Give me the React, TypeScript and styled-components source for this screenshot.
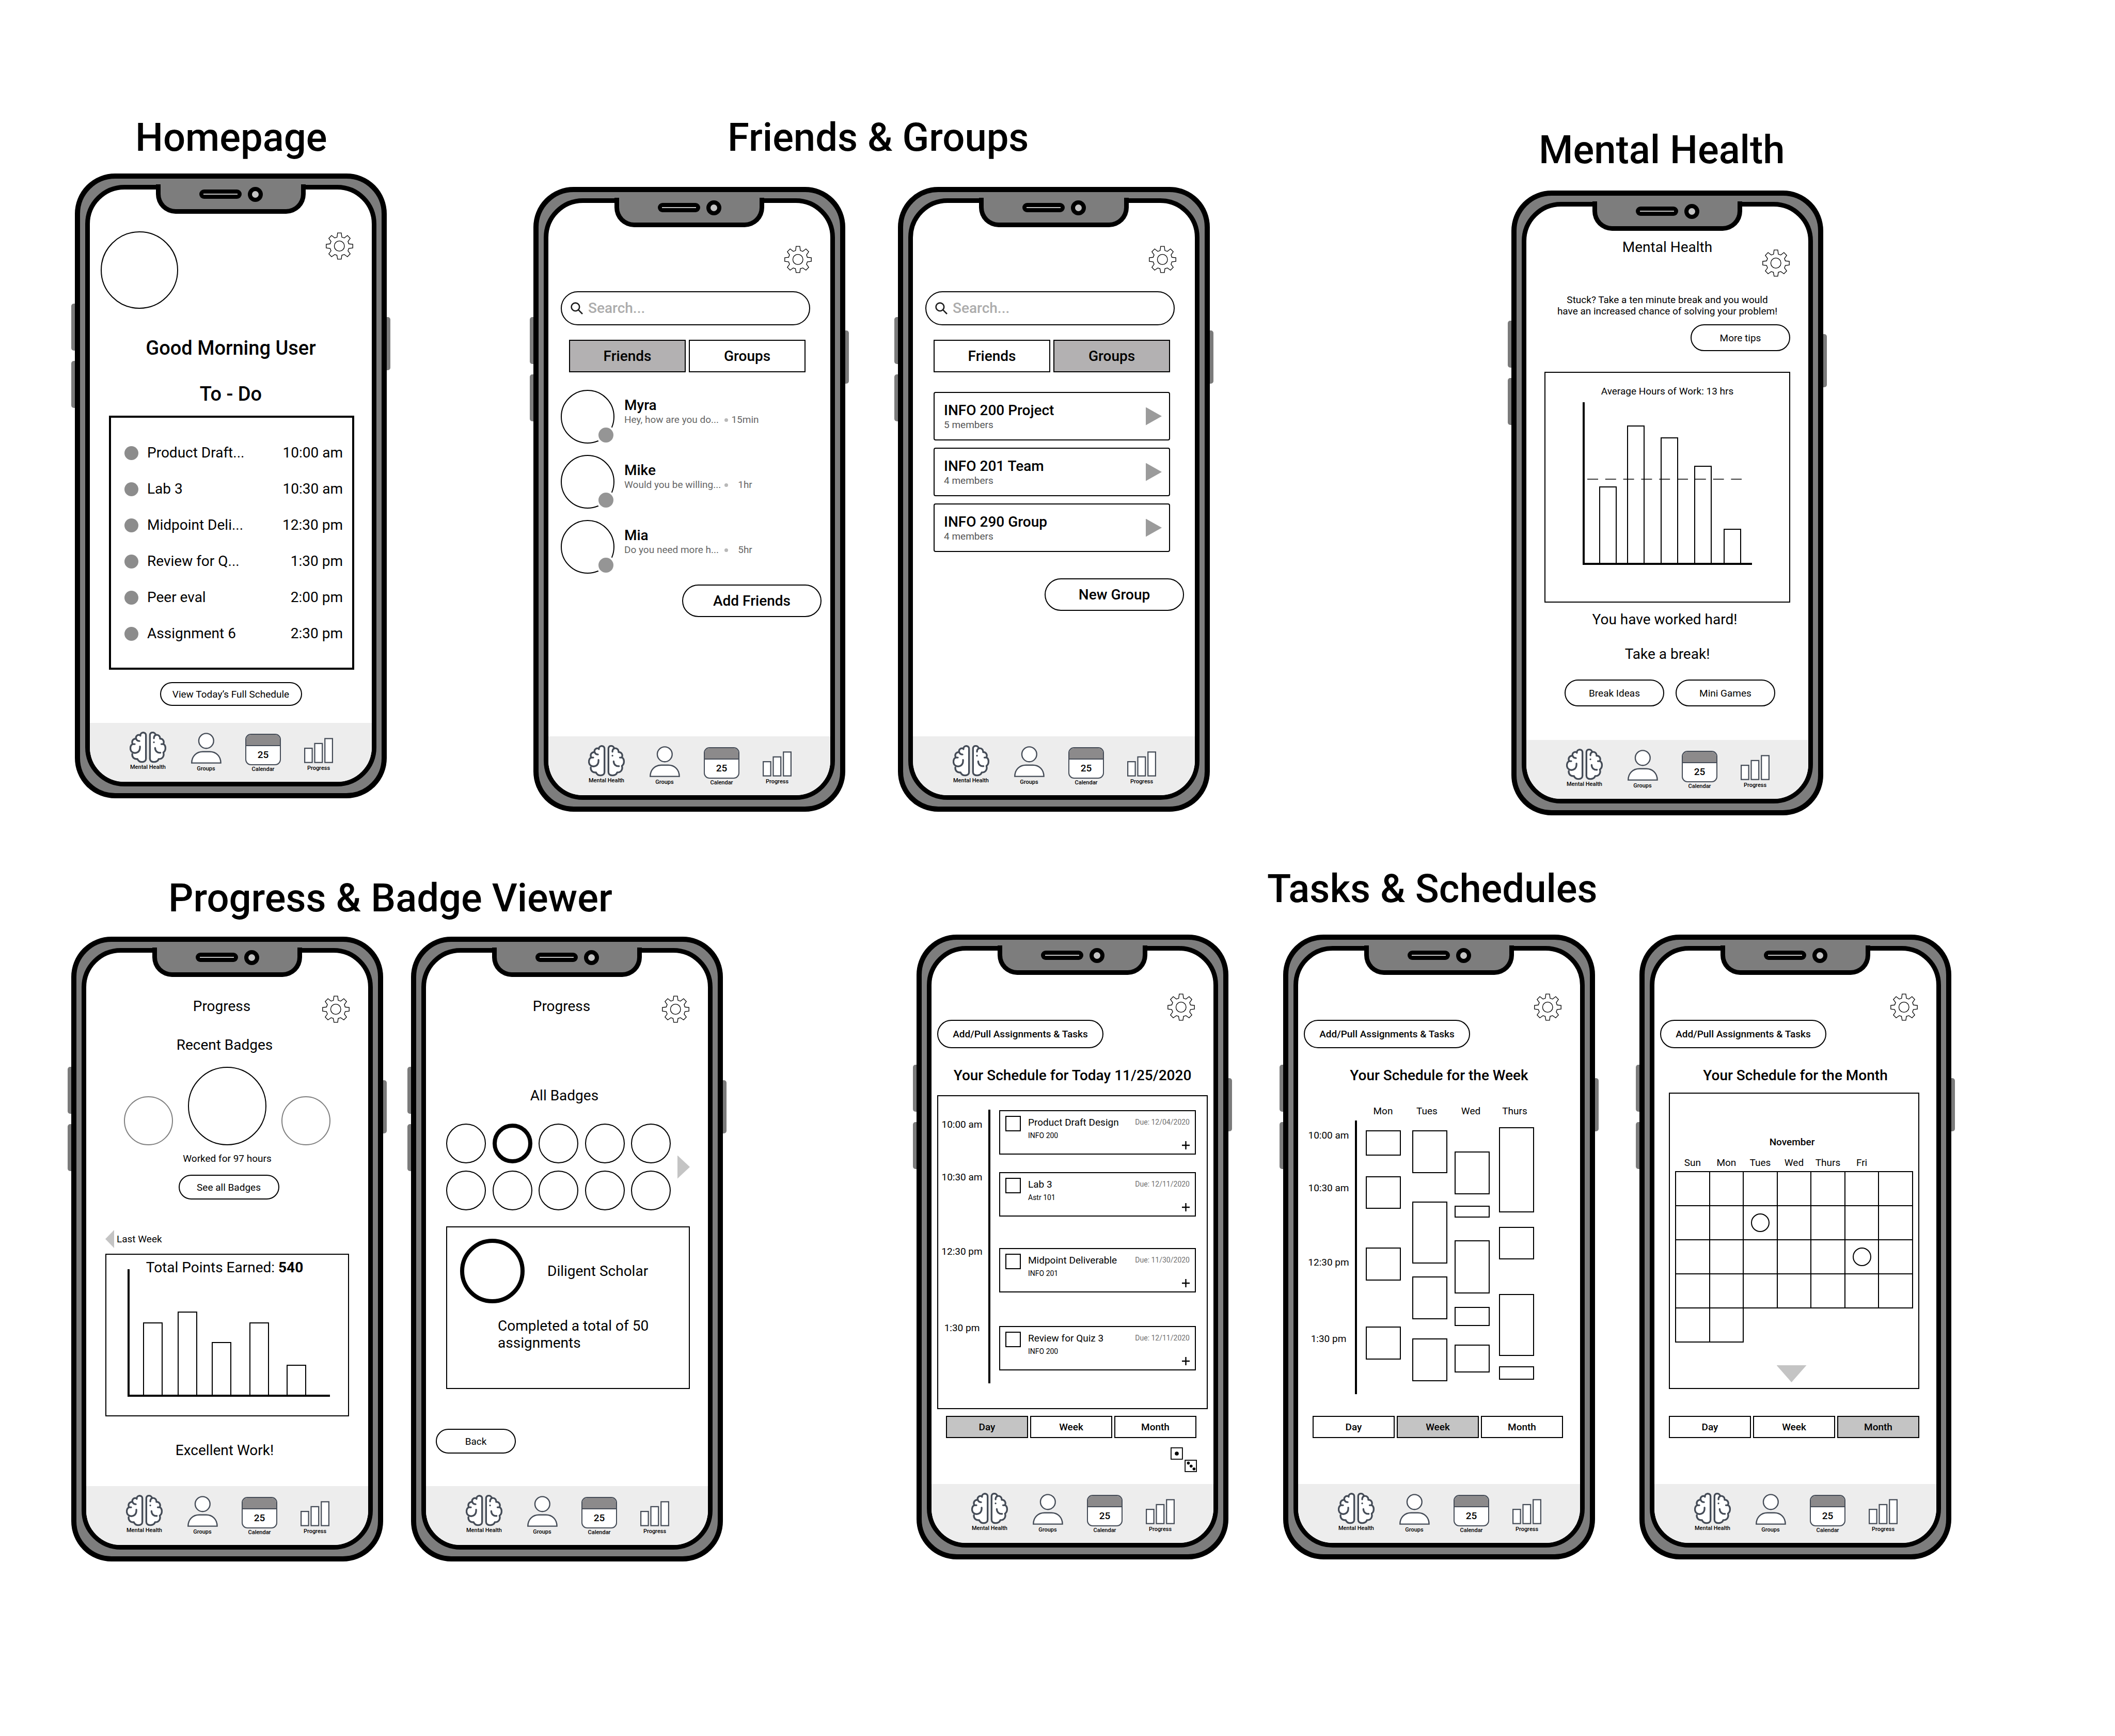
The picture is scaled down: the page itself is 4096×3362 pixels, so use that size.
import React, { useId } from "react";
import styled, { createGlobalStyle, css } from "styled-components";

const ink = "#000000";
const shell = "#7d7d7d";
const slate = "#454c57";
const soft = "#c4c4c4";

const GlobalStyle = createGlobalStyle`
  *, *::before, *::after { box-sizing: border-box; }
  body {
    margin: 0;
    background: #ffffff;
    color: ${ink};
    font-family: Roboto, "Liberation Sans", sans-serif;
  }
  h1, h2, h3, p, ul, ol, figure { margin: 0; padding: 0; }
  ul, ol { list-style: none; }
  button, input {
    font: inherit;
    color: inherit;
    margin: 0;
    padding: 0;
    background: none;
    border: 0;
    border-radius: 0;
  }
  svg { display: block; }
`;

/* ---------- board ---------- */

const Board = styled.main`
  padding: 221px 0 338px;
`;

const BoardRow = styled.div<{ $columns: string; $inset: number }>`
  display: grid;
  grid-template-columns: ${(p) => p.$columns};
  align-items: start;
  padding-left: ${(p) => p.$inset}px;
  & + & {
    margin-top: 97px;
  }
`;

const Group = styled.section<{ $drop?: number }>`
  padding-top: ${(p) => p.$drop ?? 0}px;
`;

const GroupTitle = styled.h1<{ $indent: number }>`
  padding-left: ${(p) => p.$indent}px;
  font-size: 76px;
  line-height: 90px;
  font-weight: 500;
  white-space: nowrap;
`;

const Phones = styled.div<{ $columns: string; $gap: number }>`
  display: grid;
  grid-template-columns: ${(p) => p.$columns};
  margin-top: ${(p) => p.$gap}px;
`;

/* ---------- phone ---------- */

const Shell = styled.article`
  position: relative;
  display: flex;
  width: 604px;
  min-height: 1210px;
  padding: 12px 10px 13px;
  border: 10px solid ${ink};
  border-radius: 78px;
  background: ${shell};
`;

const SideKey = styled.span<{ $side: "left" | "right"; $top: number; $size: number }>`
  position: absolute;
  top: ${(p) => p.$top}px;
  width: 7px;
  height: ${(p) => p.$size}px;
  background: #7b7b7b;
  ${(p) =>
    p.$side === "left"
      ? css`
          left: -17px;
          border-radius: 5px 0 0 5px;
        `
      : css`
          right: -17px;
          border-radius: 0 5px 5px 0;
        `}
`;

const Screen = styled.div`
  flex: 1;
  display: flex;
  flex-direction: column;
  overflow: hidden;
  border: 9px solid ${ink};
  border-radius: 76px;
  background: #ffffff;
`;

const Notch = styled.div`
  position: absolute;
  top: 11px;
  left: 50%;
  transform: translateX(-50%);
  display: flex;
  justify-content: center;
  gap: 12px;
  width: 290px;
  height: 57px;
  padding-top: 5px;
  border: 9px solid ${ink};
  border-top: 0;
  border-radius: 0 0 38px 38px;
  background: ${shell};
`;

const Speaker = styled.span`
  width: 82px;
  height: 18px;
  margin-top: 5px;
  padding: 8px;
  border-radius: 9px;
  background: ${ink};
  &::after {
    content: "";
    display: block;
    height: 2px;
    background: ${soft};
  }
`;

const Camera = styled.span`
  width: 29px;
  height: 29px;
  border: 8px solid ${ink};
  border-radius: 50%;
  background: ${soft};
`;

const Body = styled.div`
  flex: 1;
`;

/* ---------- bottom navigation ---------- */

const Nav = styled.nav`
  display: flex;
  align-items: flex-start;
  gap: 45px;
  height: 114px;
  padding-left: 76px;
  background: #ededed;
`;

const NavItem = styled.button<{ $drop: number; $gap: number; $width: number }>`
  display: flex;
  flex-direction: column;
  align-items: center;
  gap: ${(p) => p.$gap}px;
  width: ${(p) => p.$width}px;
  padding-top: ${(p) => p.$drop}px;
  font-size: 11px;
  line-height: 14px;
  font-weight: 500;
  white-space: nowrap;
`;

const DateTile = styled.span`
  display: block;
  width: 69px;
  height: 61px;
  border: 2px solid ${slate};
  border-radius: 11px;
  overflow: hidden;
  background: #ffffff;
  font-size: 19px;
  line-height: 34px;
  &::before {
    content: "";
    display: block;
    height: 22px;
    border-bottom: 2px solid ${slate};
    background: #8c8a8b;
  }
`;

const BrainIcon = () => (
  <svg width="71" height="61" viewBox="19 28 276 236" fill="none" stroke={slate} strokeWidth="13" strokeLinecap="round" strokeLinejoin="round">
    <path
      stroke="none"
      fill="#ffffff"
      d="M142 54C142 28 108 28 99 51C80 46 64 62 68 79C44 82 34 98 41 120C20 130 20 170 38 186C36 220 54 236 78 233C88 264 142 262 142 232Z"
    />
    <path d="M100 58C98 28 142 26 142 54V232C142 262 90 264 78 233C54 236 36 220 39 195" />
    <path d="M98 53C76 47 61 66 69 82C73 94 80 98 93 98" />
    <path d="M65 80C44 82 33 98 41 119M41 121H58" />
    <path d="M42 121C20 131 20 168 38 181C62 196 100 186 97 139" />
    <path
      fill="#ffffff"
      d="M172 232V54C172 26 212 28 214 52C238 48 250 64 248 80C270 80 282 100 273 120C294 132 294 170 273 184C282 212 266 234 238 233C228 264 172 262 172 232Z"
    />
    <path d="M214 54C204 58 202 66 202 77M202 107V107.5M273 121H258M211 150C212 172 226 188 251 186" />
  </svg>
);

const PersonIcon = () => (
  <svg width="59" height="60" viewBox="0 0 75 76" fill="#ffffff" stroke={slate} strokeWidth="3">
    <circle cx="37.3" cy="20" r="18.3" />
    <path d="M1.6 74.3C1.6 58 13 46.6 29 46.6H46C62 46.6 73.2 58 73.2 74.3Z" />
  </svg>
);

const BarsIcon = () => (
  <svg width="56" height="49" viewBox="0 0 71 62" fill="#ffffff" stroke={slate} strokeWidth="2.8">
    <path d="M1.4 25.4H19.8V60.4H1.4ZM26 13.6H44.6V60.4H26ZM51 1.6H69.6V60.4H51Z" />
  </svg>
);

const GearIcon = () => (
  <svg width="53" height="53" viewBox="51 54 200 198" fill="none" stroke={ink} strokeWidth="5">
    <path d="M137 57H164L168 88L186 94L209 76L229 97L213 119L219 137L248 140V167L219 170L213 188L229 210L209 231L186 215L168 220L164 249H137L132 220L116 215L93 231L73 210L89 188L82 170L54 167V140L82 137L89 119L73 97L93 76L116 94L133 88Z" />
    <circle cx="150" cy="153" r="37" />
  </svg>
);

const BottomNav = () => (
  <Nav aria-label="Main">
    <NavItem type="button" $drop={17} $gap={1} $width={73}>
      <BrainIcon />
      Mental Health
    </NavItem>
    <NavItem type="button" $drop={19} $gap={3} $width={62}>
      <PersonIcon />
      Groups
    </NavItem>
    <NavItem type="button" $drop={21} $gap={1} $width={69}>
      <DateTile>25</DateTile>
      Calendar
    </NavItem>
    <NavItem type="button" $drop={29} $gap={3} $width={56}>
      <BarsIcon />
      Progress
    </NavItem>
  </Nav>
);

const Phone = ({ children }: { children: React.ReactNode }) => (
  <Shell>
    <SideKey $side="left" $top={242} $size={91} />
    <SideKey $side="left" $top={353} $size={91} />
    <SideKey $side="right" $top={268} $size={103} />
    <Screen>
      <Body>{children}</Body>
      <BottomNav />
    </Screen>
    <Notch>
      <Speaker />
      <Camera />
    </Notch>
  </Shell>
);

/* ---------- shared parts ---------- */

const TopBar = styled.header<{ $inset?: number }>`
  display: grid;
  grid-template-columns: 1fr auto 1fr;
  align-items: start;
  padding: 0 36px 0 ${(p) => p.$inset ?? 21}px;
`;

const TopSlot = styled.div<{ $drop?: number }>`
  padding-top: ${(p) => p.$drop ?? 0}px;
`;

const TopTitle = styled.h2<{ $drop: number }>`
  padding-top: ${(p) => p.$drop}px;
  font-size: 28px;
  line-height: 34px;
  font-weight: 400;
`;

const GearButton = styled.button`
  justify-self: end;
  width: 53px;
  height: 53px;
  margin-top: 83px;
`;

const Gear = () => (
  <GearButton type="button" aria-label="Settings">
    <GearIcon />
  </GearButton>
);

const Hero = styled.p<{ $above: number }>`
  margin-top: ${(p) => p.$above}px;
  font-size: 38px;
  line-height: 46px;
  font-weight: 500;
  text-align: center;
`;

const Line = styled.p<{ $above: number; $strong?: boolean; $trail?: boolean }>`
  margin-top: ${(p) => p.$above}px;
  padding-right: ${(p) => (p.$trail ? 10 : 0)}px;
  font-size: 28px;
  line-height: 34px;
  font-weight: ${(p) => (p.$strong ? 500 : 400)};
  text-align: center;
  white-space: nowrap;
`;

const Note = styled.p<{ $above: number }>`
  margin-top: ${(p) => p.$above}px;
  font-size: 19px;
  line-height: 22px;
  text-align: center;
`;

const ButtonRow = styled.div<{ $above: number; $align?: string; $pad?: string }>`
  display: flex;
  gap: 22px;
  justify-content: ${(p) => p.$align ?? "center"};
  margin-top: ${(p) => p.$above}px;
  padding: ${(p) => p.$pad ?? "0"};
`;

const Pill = styled.button<{ $width: number; $height: number; $large?: boolean; $strong?: boolean }>`
  width: ${(p) => p.$width}px;
  height: ${(p) => p.$height}px;
  border: 2px solid ${ink};
  border-radius: 34px;
  font-size: ${(p) => (p.$large ? 28 : 19)}px;
  font-weight: ${(p) => (p.$large || p.$strong ? 500 : 400)};
  white-space: nowrap;
`;

const Ring = styled.span<{ $size: number; $weight?: number; $faint?: boolean }>`
  position: relative;
  flex: none;
  display: block;
  width: ${(p) => p.$size}px;
  height: ${(p) => p.$size}px;
  border: ${(p) => p.$weight ?? 2}px solid ${(p) => (p.$faint ? "#7f7f7f" : ink)};
  border-radius: 50%;
`;

const Arrow = styled.span<{ $dir: "left" | "right" | "down"; $w: number; $h: number; $dark?: boolean }>`
  flex: none;
  display: block;
  width: ${(p) => p.$w}px;
  height: ${(p) => p.$h}px;
  background: ${(p) => (p.$dark ? "#9b9b9b" : soft)};
  clip-path: ${(p) =>
    p.$dir === "left"
      ? "polygon(0 50%, 100% 0, 100% 100%)"
      : p.$dir === "right"
        ? "polygon(0 0, 100% 50%, 0 100%)"
        : "polygon(0 0, 100% 0, 50% 100%)"};
`;

/* ---------- home ---------- */

const TodoList = styled.ul`
  margin: 19px 34px 0 37px;
  padding: 33px 18px 31px 26px;
  border: 4px solid ${ink};
`;

const TodoItem = styled.li`
  display: flex;
  align-items: center;
  gap: 17px;
  height: 70px;
  font-size: 28px;
  line-height: 34px;
  white-space: nowrap;
  &::before {
    content: "";
    width: 27px;
    height: 27px;
    border-radius: 50%;
    background: #8c8c8c;
  }
  time {
    margin-left: auto;
  }
`;

const todos = [
  ["Product Draft...", "10:00 am"],
  ["Lab 3", "10:30 am"],
  ["Midpoint Deli...", "12:30 pm"],
  ["Review for Q...", "1:30 pm"],
  ["Peer eval", "2:00 pm"],
  ["Assignment 6", "2:30 pm"],
];

const HomeScreen = () => (
  <Phone>
    <TopBar>
      <TopSlot $drop={81}>
        <Ring $size={150} />
      </TopSlot>
      <span />
      <Gear />
    </TopBar>
    <Hero $above={53}>Good Morning User</Hero>
    <Hero $above={43}>To - Do</Hero>
    <TodoList>
      {todos.map(([name, at]) => (
        <TodoItem key={name}>
          {name}
          <time>{at}</time>
        </TodoItem>
      ))}
    </TodoList>
    <ButtonRow $above={24}>
      <Pill type="button" $width={275} $height={46}>
        View Today’s Full Schedule
      </Pill>
    </ButtonRow>
  </Phone>
);

/* ---------- friends and groups ---------- */

const SearchBox = styled.label`
  display: flex;
  align-items: center;
  gap: 10px;
  height: 66px;
  margin: 35px 39px 0 24px;
  padding: 0 17px;
  border: 2px solid ${ink};
  border-radius: 33px;
  input {
    flex: 1;
    min-width: 0;
    outline: 0;
    font-size: 28px;
    line-height: 34px;
    font-weight: 500;
  }
  input::placeholder {
    color: #acacac;
    opacity: 1;
  }
`;

const Search = () => {
  const id = useId();
  return (
    <SearchBox htmlFor={id}>
      <svg width="24" height="24" viewBox="0 0 24 24" fill="none" stroke="#1c1c1c" strokeWidth="2.6" aria-hidden="true">
        <circle cx="9.4" cy="9.4" r="7.8" />
        <path d="M15.2 15.2L23 23" />
      </svg>
      <input id={id} type="search" placeholder="Search..." aria-label="Search" />
    </SearchBox>
  );
};

const TabBar = styled.div`
  display: flex;
  gap: 6px;
  margin: 28px 48px 0 40px;
`;

const Tab = styled.button<{ $on?: boolean }>`
  flex: 1;
  height: 63px;
  border: 2px solid ${ink};
  background: ${(p) => (p.$on ? "#b3b1b2" : "#ffffff")};
  font-size: 28px;
  font-weight: 500;
`;

const FriendList = styled.ul`
  display: flex;
  flex-direction: column;
  gap: 22px;
  margin: 34px 0 0 24px;
`;

const Friend = styled.li`
  display: flex;
  gap: 19px;
`;

const Presence = styled.span`
  position: absolute;
  right: -4px;
  bottom: -4px;
  width: 37px;
  height: 37px;
  border: 4px solid #ffffff;
  border-radius: 50%;
  background: #959595;
`;

const FriendText = styled.div`
  padding-top: 13px;
`;

const ItemName = styled.h3`
  font-size: 28px;
  line-height: 34px;
  font-weight: 500;
`;

const Preview = styled.p`
  display: flex;
  align-items: center;
  color: #666666;
  font-size: 19px;
  line-height: 22px;
  white-space: nowrap;
  span {
    width: 194px;
  }
  i {
    width: 7px;
    height: 7px;
    margin-right: 5px;
    border-radius: 50%;
    background: #b8b8b8;
  }
  time {
    width: 56px;
    text-align: center;
  }
`;

const friends = [
  ["Myra", "Hey, how are you do...", "15min"],
  ["Mike", "Would you be willing...", "1hr"],
  ["Mia", "Do you need more h...", "5hr"],
];

const FriendsScreen = () => (
  <Phone>
    <TopBar>
      <span />
      <span />
      <Gear />
    </TopBar>
    <Search />
    <TabBar>
      <Tab type="button" $on>
        Friends
      </Tab>
      <Tab type="button">Groups</Tab>
    </TabBar>
    <FriendList>
      {friends.map(([name, text, ago]) => (
        <Friend key={name}>
          <Ring $size={104}>
            <Presence />
          </Ring>
          <FriendText>
            <ItemName>{name}</ItemName>
            <Preview>
              <span>{text}</span>
              <i />
              <time>{ago}</time>
            </Preview>
          </FriendText>
        </Friend>
      ))}
    </FriendList>
    <ButtonRow $above={21} $align="flex-end" $pad="0 17px 0 0">
      <Pill type="button" $width={270} $height={63} $large>
        Add Friends
      </Pill>
    </ButtonRow>
  </Phone>
);

const GroupList = styled.ul`
  display: flex;
  flex-direction: column;
  gap: 14px;
  margin: 38px 48px 0 40px;
`;

const GroupCard = styled.li`
  display: flex;
  justify-content: space-between;
  align-items: center;
  height: 94px;
  padding: 0 14px 0 18px;
  border: 2px solid ${ink};
  border-radius: 4px;
`;

const Members = styled.p`
  color: #555555;
  font-size: 19px;
  line-height: 22px;
`;

const groups = [
  ["INFO 200 Project", "5 members"],
  ["INFO 201 Team", "4 members"],
  ["INFO 290 Group", "4 members"],
];

const GroupsScreen = () => (
  <Phone>
    <TopBar>
      <span />
      <span />
      <Gear />
    </TopBar>
    <Search />
    <TabBar>
      <Tab type="button">Friends</Tab>
      <Tab type="button" $on>
        Groups
      </Tab>
    </TabBar>
    <GroupList>
      {groups.map(([name, count]) => (
        <GroupCard key={name}>
          <div>
            <ItemName>{name}</ItemName>
            <Members>{count}</Members>
          </div>
          <Arrow $dir="right" $w={31} $h={35} $dark />
        </GroupCard>
      ))}
    </GroupList>
    <ButtonRow $above={51} $align="flex-end" $pad="0 21px 0 0">
      <Pill type="button" $width={270} $height={63} $large>
        New Group
      </Pill>
    </ButtonRow>
  </Phone>
);

/* ---------- charts ---------- */

const ChartBox = styled.figure<{ $above: number; $height: number; $inset: string }>`
  display: grid;
  height: ${(p) => p.$height}px;
  margin: ${(p) => p.$above}px ${(p) => p.$inset} 0;
  border: 2px solid ${ink};
  > * {
    grid-area: 1 / 1;
  }
`;

const ChartTitle = styled.figcaption<{ $above: number; $large?: boolean }>`
  padding-top: ${(p) => p.$above}px;
  padding-right: ${(p) => (p.$large ? 10 : 0)}px;
  font-size: ${(p) => (p.$large ? 28 : 19)}px;
  line-height: ${(p) => (p.$large ? 34 : 22)}px;
  text-align: center;
  white-space: nowrap;
`;

type ChartProps = {
  width: number;
  height: number;
  axis: { x: number; top: number; base: number; end: number };
  barWidth: number;
  bars: number[][];
  average?: number;
};

const BarChart = ({ width, height, axis, barWidth, bars, average }: ChartProps) => (
  <svg width={width} height={height} viewBox={`0 0 ${width} ${height}`} fill="none" stroke={ink}>
    {bars.map(([x, top]) => (
      <rect key={x} x={x + 1} y={top + 1} width={barWidth - 2} height={axis.base - top - 1} strokeWidth="2" />
    ))}
    {average !== undefined && <path d={`M81 ${average}H380`} strokeWidth="1.6" strokeDasharray="21 13.8" />}
    <path d={`M${axis.x} ${axis.top}V${axis.base}H${axis.end}`} strokeWidth="4" />
  </svg>
);

const MentalHealthScreen = () => (
  <Phone>
    <TopBar $inset={36}>
      <span />
      <TopTitle $drop={62}>Mental Health</TopTitle>
      <Gear />
    </TopBar>
    <Note $above={34}>
      Stuck? Take a ten minute break and you would
      <br />
      have an increased chance of solving your problem!
    </Note>
    <ButtonRow $above={14} $align="flex-end" $pad="0 35px 0 0">
      <Pill type="button" $width={193} $height={52}>
        More tips
      </Pill>
    </ButtonRow>
    <ChartBox $above={40} $height={447} $inset="35px">
      <ChartTitle $above={25}>Average Hours of Work: 13 hrs</ChartTitle>
      <BarChart
        width={472}
        height={443}
        axis={{ x: 74, top: 57, base: 370, end: 400 }}
        barWidth={34}
        bars={[
          [104, 220],
          [158, 102],
          [223, 125],
          [288, 180],
          [345, 302],
        ]}
        average={206}
      />
    </ChartBox>
    <Line $above={16} $trail>
      You have worked hard!
    </Line>
    <Line $above={33}>Take a break!</Line>
    <ButtonRow $above={32} $align="flex-start" $pad="0 0 0 74px">
      <Pill type="button" $width={193} $height={52}>
        Break Ideas
      </Pill>
      <Pill type="button" $width={193} $height={52}>
        Mini Games
      </Pill>
    </ButtonRow>
  </Phone>
);

/* ---------- progress ---------- */

const BadgeTrio = styled.div`
  display: flex;
  justify-content: center;
  align-items: flex-end;
  gap: 29px;
  margin-top: 25px;
`;

const WeekLink = styled.button`
  display: flex;
  align-items: center;
  gap: 5px;
  margin: 59px 0 0 37px;
  font-size: 19px;
  line-height: 22px;
`;

const ProgressScreen = () => (
  <Phone>
    <TopBar $inset={15}>
      <span />
      <TopTitle $drop={87}>Progress</TopTitle>
      <Gear />
    </TopBar>
    <Line $above={26} $trail>
      Recent Badges
    </Line>
    <BadgeTrio>
      <Ring $size={95} $faint />
      <Ring $size={152} />
      <Ring $size={95} $faint />
    </BadgeTrio>
    <Note $above={15}>Worked for 97 hours</Note>
    <ButtonRow $above={20} $pad="0 0 0 6px">
      <Pill type="button" $width={195} $height={48}>
        See all Badges
      </Pill>
    </ButtonRow>
    <WeekLink type="button">
      <Arrow $dir="left" $w={17} $h={35} />
      Last Week
    </WeekLink>
    <ChartBox $above={11} $height={315} $inset="37px">
      <ChartTitle $above={8} $large>
        Total Points Earned: <b>540</b>
      </ChartTitle>
      <BarChart
        width={468}
        height={311}
        axis={{ x: 43, top: 28, base: 273, end: 433 }}
        barWidth={38}
        bars={[
          [71, 131],
          [138, 110],
          [204, 169],
          [277, 131],
          [349, 213],
        ]}
      />
    </ChartBox>
    <Line $above={49} $trail>
      Excellent Work!
    </Line>
  </Phone>
);

const BadgeArea = styled.div`
  display: flex;
  align-items: center;
  justify-content: space-between;
  margin: 37px 35px 0 39px;
`;

const BadgeGrid = styled.div`
  display: grid;
  grid-template-columns: repeat(5, 77px);
  justify-content: space-between;
  row-gap: 14px;
  width: 435px;
`;

const BadgeCard = styled.section`
  height: 315px;
  margin: 31px 35px 0 39px;
  padding: 22px 25px;
  border: 2px solid ${ink};
  font-size: 28px;
  line-height: 33px;
`;

const BadgeHead = styled.div`
  display: flex;
  align-items: center;
  gap: 44px;
`;

const BadgeText = styled.p`
  width: 320px;
  margin: 27px 0 0 73px;
`;

const BadgesScreen = () => (
  <Phone>
    <TopBar $inset={15}>
      <span />
      <TopTitle $drop={87}>Progress</TopTitle>
      <Gear />
    </TopBar>
    <Line $above={124} $trail>
      All Badges
    </Line>
    <BadgeArea>
      <BadgeGrid>
        {Array.from({ length: 10 }, (_, i) => (
          <Ring key={i} $size={77} $weight={i === 1 ? 8 : 2} />
        ))}
      </BadgeGrid>
      <Arrow $dir="right" $w={24} $h={45} />
    </BadgeArea>
    <BadgeCard>
      <BadgeHead>
        <Ring $size={125} $weight={8} />
        Diligent Scholar
      </BadgeHead>
      <BadgeText>Completed a total of 50 assignments</BadgeText>
    </BadgeCard>
    <ButtonRow $above={77} $align="flex-start" $pad="0 0 0 19px">
      <Pill type="button" $width={155} $height={48}>
        Back
      </Pill>
    </ButtonRow>
  </Phone>
);

/* ---------- schedules ---------- */

const ScheduleTop = () => (
  <TopBar $inset={11}>
    <TopSlot $drop={134}>
      <Pill type="button" $width={322} $height={55} $strong>
        Add/Pull Assignments &amp; Tasks
      </Pill>
    </TopSlot>
    <span />
    <Gear />
  </TopBar>
);

const Segments = styled.div<{ $above: number }>`
  display: flex;
  gap: 4px;
  margin: ${(p) => p.$above}px 33px 0 28px;
`;

const Segment = styled.button<{ $on: boolean }>`
  flex: 1;
  height: 43px;
  border: 2px solid ${ink};
  background: ${(p) => (p.$on ? soft : "#ffffff")};
  font-size: 19px;
  font-weight: 500;
`;

const RangePicker = ({ active, above }: { active: string; above: number }) => (
  <Segments $above={above}>
    {["Day", "Week", "Month"].map((range) => (
      <Segment key={range} type="button" $on={range === active} aria-pressed={range === active}>
        {range}
      </Segment>
    ))}
  </Segments>
);

const Timeline = styled.div<{ $pad: string }>`
  display: grid;
  grid-template-columns: 92px 4px 1fr;
  column-gap: 5px;
  padding: ${(p) => p.$pad};
`;

const Times = styled.ol`
  padding-top: 18px;
  font-size: 19px;
  line-height: 22px;
  text-align: center;
`;

const TimeSlot = styled.li<{ $span: number }>`
  height: ${(p) => p.$span}px;
`;

const Rail = styled.div`
  height: 530px;
  background: ${ink};
`;

const slots: [string, number][] = [
  ["10:00 am", 102],
  ["10:30 am", 144],
  ["12:30 pm", 148],
  ["1:30 pm", 22],
];

const TimeScale = () => (
  <>
    <Times>
      {slots.map(([label, span]) => (
        <TimeSlot key={label} $span={span}>
          {label}
        </TimeSlot>
      ))}
    </Times>
    <Rail />
  </>
);

const DayBox = styled.section`
  height: 608px;
  margin: 21px 11px 0 11px;
  border: 2px solid ${ink};
`;

const TaskList = styled.ul`
  padding: 1px 0 0 12px;
`;

const TaskSlot = styled.li<{ $span: number }>`
  height: ${(p) => p.$span}px;
`;

const TaskCard = styled.div`
  display: grid;
  grid-template-columns: 30px 1fr auto;
  column-gap: 14px;
  height: 86px;
  padding: 9px 10px 8px;
  border: 2px solid ${ink};
`;

const Tick = styled.input`
  appearance: none;
  width: 30px;
  height: 30px;
  border: 2px solid ${ink};
  background: #ffffff;
  &:checked {
    background: ${ink};
  }
`;

const TaskName = styled.label`
  display: block;
  padding-top: 2px;
  font-size: 19px;
  line-height: 22px;
  white-space: nowrap;
`;

const Course = styled.p`
  margin-top: 6px;
  font-size: 14px;
  line-height: 16px;
`;

const TaskSide = styled.div`
  display: flex;
  flex-direction: column;
  justify-content: space-between;
  align-items: flex-end;
  padding-top: 4px;
  color: #707070;
  font-size: 14px;
  line-height: 16px;
`;

const PlusButton = styled.button`
  width: 15px;
  height: 16px;
`;

const tasks: [string, string, string, number][] = [
  ["Product Draft Design", "INFO 200", "Due: 12/04/2020", 120],
  ["Lab 3", "Astr 101", "Due: 12/11/2020", 147],
  ["Midpoint Deliverable", "INFO 201", "Due: 11/30/2020", 151],
  ["Review for Quiz 3", "INFO 200", "Due: 12/11/2020", 86],
];

const Task = ({ name, course, due }: { name: string; course: string; due: string }) => {
  const id = useId();
  return (
    <TaskCard>
      <Tick type="checkbox" id={id} />
      <div>
        <TaskName htmlFor={id}>{name}</TaskName>
        <Course>{course}</Course>
      </div>
      <TaskSide>
        {due}
        <PlusButton type="button" aria-label={`Expand ${name}`}>
          <svg width="15" height="16" viewBox="0 0 15 16" stroke={ink} strokeWidth="2.4">
            <path d="M0 8H15M7.5 0V16" />
          </svg>
        </PlusButton>
      </TaskSide>
    </TaskCard>
  );
};

const DiceRow = styled.div`
  display: flex;
  justify-content: flex-end;
  margin: 18px 32px 0 0;
`;

const Dice = () => (
  <svg width="51" height="48" viewBox="0 0 51 48" fill="none" stroke={ink} strokeWidth="1.8">
    <rect x="0.9" y="0.9" width="22" height="22" />
    <rect x="28.1" y="24.9" width="22" height="22" />
    <g fill={ink} stroke="none">
      <circle cx="12" cy="12" r="3.8" />
      <circle cx="34.4" cy="30.4" r="2.8" />
      <circle cx="39.8" cy="36.2" r="2.8" />
      <circle cx="45.4" cy="41.8" r="2.8" />
    </g>
  </svg>
);

const DayScreen = () => (
  <Phone>
    <ScheduleTop />
    <Line $above={36} $strong>
      Your Schedule for Today 11/25/2020
    </Line>
    <DayBox>
      <Timeline $pad="26px 21px 0 0">
        <TimeScale />
        <TaskList>
          {tasks.map(([name, course, due, span]) => (
            <TaskSlot key={name} $span={span}>
              <Task name={name} course={course} due={due} />
            </TaskSlot>
          ))}
        </TaskList>
      </Timeline>
    </DayBox>
    <RangePicker active="Day" above={13} />
    <DiceRow>
      <Dice />
    </DiceRow>
  </Phone>
);

const WeekHead = styled.div`
  display: grid;
  grid-template-columns: repeat(4, 85px);
  margin: 41px 0 7px 122px;
  font-size: 19px;
  line-height: 22px;
  text-align: center;
`;

const WeekColumns = styled.div`
  display: grid;
  grid-template-columns: 90px 82px 86px 68px;
  padding-left: 12px;
`;

const Block = styled.div<{ $above: number; $height: number }>`
  width: 68px;
  height: ${(p) => p.$height}px;
  margin-top: ${(p) => p.$above}px;
  border: 2px solid ${ink};
`;

const BlockColumn = styled.div`
  display: flex;
  flex-direction: column;
`;

/* Each pair is [space above, height] of one busy block. */
const week = [
  [[19, 49], [40, 63], [75, 64], [89, 64]],
  [[19, 83], [55, 120], [25, 83], [37, 83]],
  [[60, 83], [22, 23], [44, 103], [26, 37], [36, 54]],
  [[13, 165], [28, 63], [67, 120], [20, 26]],
];

const WeekScreen = () => (
  <Phone>
    <ScheduleTop />
    <Line $above={36} $strong>
      Your Schedule for the Week
    </Line>
    <WeekHead>
      <span>Mon</span>
      <span>Tues</span>
      <span>Wed</span>
      <span>Thurs</span>
    </WeekHead>
    <Timeline $pad="0 0 0 13px">
      <TimeScale />
      <WeekColumns>
        {week.map((blocks, i) => (
          <BlockColumn key={i}>
            {blocks.map(([above, height], j) => (
              <Block key={j} $above={above} $height={height} />
            ))}
          </BlockColumn>
        ))}
      </WeekColumns>
    </Timeline>
    <RangePicker active="Week" above={42} />
  </Phone>
);

const MonthBox = styled.section`
  height: 574px;
  margin: 16px 33px 0 28px;
  padding: 83px 10px 0;
  border: 2px solid ${ink};
`;

const MonthTable = styled.table`
  width: 461px;
  table-layout: fixed;
  border-collapse: collapse;
  font-size: 19px;
  line-height: 22px;
  caption {
    padding: 0 8px 18px 0;
    font-weight: 500;
  }
  th {
    height: 28px;
    padding: 0;
    vertical-align: top;
    font-weight: 400;
  }
  td {
    height: 66px;
    padding: 0;
    border: 2px solid ${ink};
  }
`;

const DayMark = styled.span`
  display: block;
  width: 36px;
  height: 36px;
  margin: 0 auto;
  border: 2px solid ${ink};
  border-radius: 50%;
`;

const MoreRow = styled.div`
  display: flex;
  justify-content: center;
  padding: 44px 10px 0 0;
`;

const marked = new Set([9, 19]);

const MonthScreen = () => (
  <Phone>
    <ScheduleTop />
    <Line $above={36} $strong>
      Your Schedule for the Month
    </Line>
    <MonthBox>
      <MonthTable>
        <caption>November</caption>
        <thead>
          <tr>
            {["Sun", "Mon", "Tues", "Wed", "Thurs", "Fri", ""].map((day, i) => (
              <th key={i} scope="col">
                {day}
              </th>
            ))}
          </tr>
        </thead>
        <tbody>
          {[0, 1, 2, 3, 4].map((row) => (
            <tr key={row}>
              {Array.from({ length: row === 4 ? 2 : 7 }, (_, col) => (
                <td key={col}>{marked.has(row * 7 + col) && <DayMark />}</td>
              ))}
            </tr>
          ))}
        </tbody>
      </MonthTable>
      <MoreRow>
        <Arrow $dir="down" $w={58} $h={33} />
      </MoreRow>
    </MonthBox>
    <RangePicker active="Month" above={52} />
  </Phone>
);

export default function App() {
  return (
    <>
      <GlobalStyle />
      <Board>
        <BoardRow $columns="888fr 1894fr 1169fr" $inset={145}>
          <Group>
            <GroupTitle $indent={117}>Homepage</GroupTitle>
            <Phones $columns="604px" $gap={25}>
              <HomeScreen />
            </Phones>
          </Group>
          <Group>
            <GroupTitle $indent={376}>Friends &amp; Groups</GroupTitle>
            <Phones $columns="706px 604px" $gap={51}>
              <FriendsScreen />
              <GroupsScreen />
            </Phones>
          </Group>
          <Group $drop={24}>
            <GroupTitle $indent={53}>Mental Health</GroupTitle>
            <Phones $columns="604px" $gap={34}>
              <MentalHealthScreen />
            </Phones>
          </Group>
        </BoardRow>
        <BoardRow $columns="1637fr 2321fr" $inset={138}>
          <Group $drop={18}>
            <GroupTitle $indent={188}>Progress &amp; Badge Viewer</GroupTitle>
            <Phones $columns="658px 604px" $gap={30}>
              <ProgressScreen />
              <BadgesScreen />
            </Phones>
          </Group>
          <Group>
            <GroupTitle $indent={679}>Tasks &amp; Schedules</GroupTitle>
            <Phones $columns="710px 690px 604px" $gap={44}>
              <DayScreen />
              <WeekScreen />
              <MonthScreen />
            </Phones>
          </Group>
        </BoardRow>
      </Board>
    </>
  );
}
